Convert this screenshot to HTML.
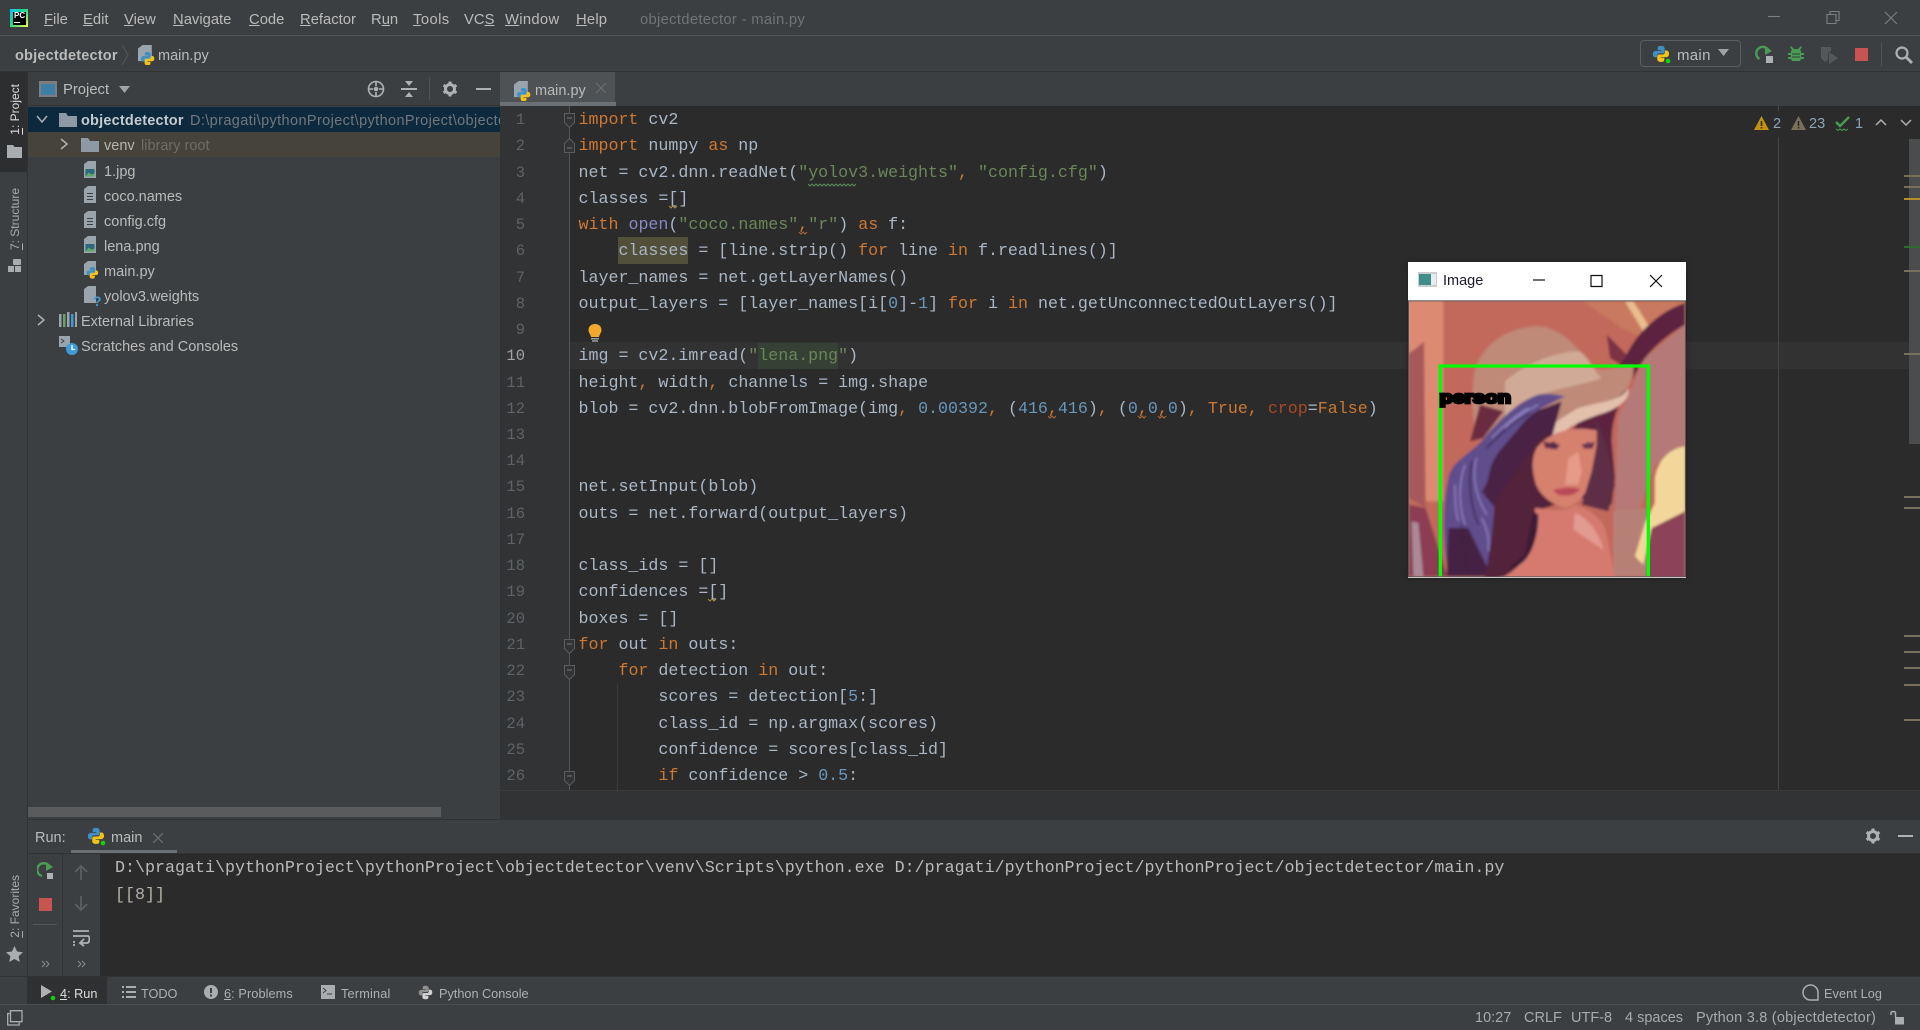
<!DOCTYPE html>
<html><head><meta charset="utf-8"><title>objectdetector - main.py</title>
<style>
html,body{margin:0;padding:0;width:1920px;height:1030px;overflow:hidden;background:#3c3f41}
body{position:relative;font-family:"Liberation Sans",sans-serif;color:#bbb;font-size:14.5px}
.a,.t,svg.i{position:absolute}
.t{white-space:pre;line-height:20px;height:20px;transform:translateY(1px)}
.m{font-size:14.8px;top:9px;color:#bbb}
.v{writing-mode:vertical-rl;transform:rotate(180deg);white-space:pre;position:absolute;font-size:12px;line-height:16px}
#code,#nums{position:absolute;font-family:"Liberation Mono",monospace;font-size:16.65px;line-height:26.24px;white-space:pre}
#code{left:578.5px;top:107.2px;color:#a9b7c6}
#nums{left:500px;width:25px;top:107.2px;text-align:right;color:#606366;font-size:15.5px}
.k{color:#cc7832}.s{color:#6a8759}.n{color:#6897bb}.b{color:#8888c6}.p{color:#aa4926}
.con{position:absolute;left:115px;font-family:"Liberation Mono",monospace;font-size:16.67px;line-height:26px;color:#bbb;white-space:pre}
.st{font-size:14.5px;top:1007px;color:#a8abae}
.bt{font-size:12.7px;top:983px;color:#aeb1b4}
</style></head><body>
<svg width="0" height="0" style="position:absolute">
<defs>
<g id="py"><path fill="#3e8fc4" d="M8 .8C5.1.8 5 2 5 3v1.6h3.2v.6H3.3C1.9 5.2.8 6.200.8 8.100c0 2 1 3 2.300 3h1.400V9.400c0-1 .9-1.900 1.900-1.900h3.300c.9 0 1.600-.7 1.600-1.600V3C11.300 1.700 9.900.8 8 .8z"/><path fill="#f4c117" d="M8 15.200c2.900 0 3-1.200 3-2.200v-1.600H7.800v-.6h4.900c1.400 0 2.500-1 2.500-2.900 0-2-1-3-2.300-3h-1.400v1.700c0 1-.9 1.900-1.900 1.900H6.300c-.9 0-1.600.7-1.600 1.600V13c0 1.300 1.400 2.200 3.300 2.200z"/></g>
<g id="folder"><path fill="#8d9aa6" d="M0 0h7l2 3h9v11H0z"/></g>
<g id="txt"><path fill="#9aa4ad" d="M0 3l4-3h8v17H0z"/><path fill="#3c3f41" d="M3 7h6v1H3zM3 10h6v1H3zM3 13h6v1H3z"/></g>
<g id="img"><path fill="#9aa4ad" d="M0 3l4-3h8v17H0z"/><rect x="1.500" y="8" width="9" height="7.500" fill="#2b6a7d"/><path fill="#5fa867" d="M1.500 15.500l3-4 3 2 3-1v3z"/></g>
<g id="pyf"><path fill="#9aa4ad" d="M0 3l4-3h8v14H0z"/><g transform="translate(2 5.500) scale(.8)"><use href="#py"/></g></g>
<g id="q"><path fill="#9aa4ad" d="M0 3l4-3h8v17H0z"/></g>
<g id="fd"><path d="M.5.500h10v9l-5 5-5-5z" fill="#313335" stroke="#5a5d60"/><path d="M3 5h5" stroke="#777"/></g>
<g id="fu"><path d="M.5 14.500h10v-9l-5-5-5 5z" fill="#313335" stroke="#5a5d60"/><path d="M3 10h5" stroke="#777"/></g>
<g id="gear"><circle cx="8" cy="8" r="4.500" fill="none" stroke="#afb1b3" stroke-width="3"/><path stroke="#afb1b3" stroke-width="3" d="M8 .500v3M8 12.500v3M1.500 4.250l2.600 1.500M11.900 10.250l2.600 1.500M1.500 11.750l2.600-1.500M11.900 5.750l2.600-1.500"/></g>
</defs></svg>

<!-- chrome bars -->
<div class="a" style="left:0;top:35px;width:1920px;height:1px;background:#515355"></div>
<div class="a" style="left:0;top:71px;width:1920px;height:1px;background:#323232"></div>
<!-- logo -->
<div class="a" style="left:10px;top:9px;width:18px;height:18px;background:linear-gradient(135deg,#07c3f2 0,#21d789 45%,#fcf84a 100%)"></div>
<div class="a" style="left:13px;top:12px;width:13px;height:13px;background:#000"></div>
<div class="t" style="left:14px;top:10px;font-size:8px;font-weight:bold;color:#fff;line-height:10px;height:10px">PC</div>
<div class="a" style="left:14px;top:22px;width:6px;height:1px;background:#fff"></div>
<!-- menu -->
<div class="t m" style="left:44px"><u>F</u>ile</div>
<div class="t m" style="left:83px"><u>E</u>dit</div>
<div class="t m" style="left:124px"><u>V</u>iew</div>
<div class="t m" style="left:173px"><u>N</u>avigate</div>
<div class="t m" style="left:249px"><u>C</u>ode</div>
<div class="t m" style="left:300px"><u>R</u>efactor</div>
<div class="t m" style="left:371px">R<u>u</u>n</div>
<div class="t m" style="left:413px;letter-spacing:.4px"><u>T</u>ools</div>
<div class="t m" style="left:464px">VC<u>S</u></div>
<div class="t m" style="left:505px;letter-spacing:.3px"><u>W</u>indow</div>
<div class="t m" style="left:576px;letter-spacing:.2px"><u>H</u>elp</div>
<div class="t m" style="left:640px;color:#717476;letter-spacing:.3px">objectdetector - main.py</div>
<!-- window controls -->
<svg class="i" style="left:1760px;top:8px" width="150" height="20" fill="none" stroke="#7d8082" stroke-width="1.100">
<path d="M8 8.500h12"/><path d="M67 6.500h9v9h-9zM70 6.500V3.500h9v9h-3"/><path d="M125 4l12 12M137 4l-12 12"/></svg>
<!-- nav bar -->
<div class="t" style="left:15px;top:45px;font-weight:bold;color:#bbb;letter-spacing:.2px">objectdetector</div>
<svg class="i" style="left:121px;top:44px" width="9" height="22" fill="none" stroke="#55585a"><path d="M1 1l6 10-6 10"/></svg>
<svg class="i" style="left:138px;top:45px" width="18" height="20"><use href="#pyf" transform="scale(1.150)"/></svg>
<div class="t" style="left:158px;top:45px">main.py</div>
<!-- run config -->
<div class="a" style="left:1640px;top:40px;width:101px;height:27px;border:1px solid #5b5e60;border-radius:4px;box-sizing:border-box"></div>
<svg class="i" style="left:1652px;top:45px" width="20" height="20"><g transform="scale(1.120)"><use href="#py"/></g><circle cx="16" cy="16" r="2.300" fill="#10d010"/></svg>
<div class="t" style="left:1677px;top:45px;font-size:15px;letter-spacing:.3px">main</div>
<svg class="i" style="left:1718px;top:49px" width="12" height="8"><path d="M0 0h11l-5.500 7z" fill="#a0a3a5"/></svg>
<svg class="i" style="left:1755px;top:45px" width="20" height="20" fill="none"><path d="M14 6.500a6.500 6.500 0 1 0-9.500 7.500" stroke="#499c54" stroke-width="2.400"/><path d="M10 1l7 5-7 4z" fill="#499c54"/><rect x="11" y="11" width="7" height="7" fill="#afb1b3"/></svg>
<svg class="i" style="left:1787px;top:45px" width="18" height="20"><path d="M4 1l3 3h4l3-3 1 1-2 3 1 1v2h3v2h-3v2h3v2h-3l-1 2H5l-1-2H1v-2h3v-2H1V8h3V6l1-1-2-3z" fill="#499c54"/><path d="M5 9h8M5 12h8" stroke="#3c3f41"/></svg>
<svg class="i" style="left:1820px;top:45px" width="20" height="20"><path d="M1 2h10v4l-3 2v7l-3 2-4-4z" fill="#55585a"/><path d="M9 7l9 6-9 6z" fill="#55585a"/></svg>
<div class="a" style="left:1855px;top:48px;width:13px;height:13px;background:#c75450"></div>
<div class="a" style="left:1881px;top:42px;width:1px;height:24px;background:#505254"></div>
<svg class="i" style="left:1894px;top:45px" width="20" height="20" fill="none" stroke="#afb1b3" stroke-width="2.200"><circle cx="8" cy="8" r="5.500"/><path d="M12 12l6 6" stroke-width="2.800"/></svg>

<!-- left stripe -->
<div class="a" style="left:27px;top:72px;width:1px;height:933px;background:#323232"></div>
<div class="a" style="left:0;top:72px;width:27px;height:100px;background:#2d2e2f"></div>
<div class="v" style="left:7px;top:84px;color:#ddd"><u>1</u>: Project</div>
<svg class="i" style="left:7px;top:145px" width="15" height="13"><path fill="#a9adb0" d="M0 0h6l1.500 2H15v11H0z"/></svg>
<div class="v" style="left:7px;top:188px;color:#a8abae"><u>7</u>: Structure</div>
<svg class="i" style="left:8px;top:259px" width="14" height="14" fill="#a9adb0"><rect x="5" y="0" width="8" height="6" rx="1"/><rect x="0" y="7" width="6" height="6"/><rect x="7" y="7" width="6" height="6"/></svg>
<div class="v" style="left:7px;top:875px;color:#a8abae"><u>2</u>: Favorites</div>
<svg class="i" style="left:6px;top:946px" width="17" height="16"><path fill="#a9adb0" d="M8.500 0l2.600 5.500 5.900.7-4.400 4 1.200 5.800-5.300-3-5.300 3 1.200-5.800L0 6.200l5.900-.7z"/></svg>

<!-- project header -->
<div class="a" style="left:39px;top:81px;width:18px;height:16px;box-sizing:border-box;border:2px solid #7b7e80;border-top-width:3px;background:#3f7fa6"></div>
<div class="t" style="left:63px;top:79px;font-size:14.8px">Project</div>
<svg class="i" style="left:119px;top:86px" width="12" height="8"><path d="M0 0h11l-5.500 7z" fill="#a0a3a5"/></svg>
<svg class="i" style="left:367px;top:80px" width="18" height="18" fill="none" stroke="#afb1b3" stroke-width="1.600"><circle cx="9" cy="9" r="7.500"/><circle cx="9" cy="9" r="1.500" fill="#afb1b3"/><path d="M9 1v5M9 12v5M1 9h5M12 9h5"/></svg>
<svg class="i" style="left:400px;top:80px" width="18" height="18"><path fill="#afb1b3" d="M1 8h16v2H1zM5 1h8L9 6zM5 17h8l-4-5z"/></svg>
<div class="a" style="left:429px;top:77px;width:1px;height:23px;background:#505254"></div>
<svg class="i" style="left:442px;top:81px" width="16" height="16"><use href="#gear"/></svg>
<div class="a" style="left:476px;top:88px;width:15px;height:2px;background:#afb1b3"></div>
<div class="a" style="left:27px;top:105px;width:473px;height:1px;background:#323232"></div>

<!-- tree -->
<div class="a" style="left:28px;top:107px;width:472px;height:25px;background:#0d293e"></div>
<div class="a" style="left:28px;top:132px;width:472px;height:25px;background:#45433a"></div>
<svg class="i" style="left:36px;top:115px" width="12" height="9" fill="none" stroke="#afb1b3" stroke-width="1.500"><path d="M1 1l5 6 5-6"/></svg>
<svg class="i" style="left:59px;top:113px" width="18" height="15"><use href="#folder"/></svg>
<div class="t" style="left:81px;top:110px;font-weight:bold;color:#c5cbd0;letter-spacing:.2px">objectdetector</div>
<div class="a" style="left:190px;top:111px;width:310px;height:20px;overflow:hidden;white-space:pre;line-height:20px;color:#73777b;letter-spacing:.38px">D:\pragati\pythonProject\pythonProject\objectdetector</div>
<svg class="i" style="left:60px;top:138px" width="9" height="13" fill="none" stroke="#afb1b3" stroke-width="1.500"><path d="M1 1l6 5-6 5"/></svg>
<svg class="i" style="left:81px;top:138px" width="18" height="15"><use href="#folder"/></svg>
<div class="t" style="left:104px;top:135px;color:#b5b6ae">venv</div>
<div class="t" style="left:141px;top:135px;color:#6f6e62">library root</div>
<svg class="i" style="left:84px;top:161px" width="13" height="18"><use href="#img"/></svg><div class="t" style="left:104px;top:161px">1.jpg</div>
<svg class="i" style="left:84px;top:186px" width="13" height="18"><use href="#txt"/></svg><div class="t" style="left:104px;top:186px">coco.names</div>
<svg class="i" style="left:84px;top:211px" width="13" height="18"><use href="#txt"/></svg><div class="t" style="left:104px;top:211px">config.cfg</div>
<svg class="i" style="left:84px;top:236px" width="13" height="18"><use href="#img"/></svg><div class="t" style="left:104px;top:236px">lena.png</div>
<svg class="i" style="left:84px;top:261px" width="17" height="19"><use href="#pyf"/></svg><div class="t" style="left:104px;top:261px">main.py</div>
<svg class="i" style="left:84px;top:286px" width="13" height="18"><use href="#q"/></svg><div class="t" style="left:93px;top:293px;font-size:14px;font-weight:bold;color:#3e9bd8;line-height:14px;height:14px">?</div><div class="t" style="left:104px;top:286px">yolov3.weights</div>
<svg class="i" style="left:37px;top:314px" width="9" height="13" fill="none" stroke="#afb1b3" stroke-width="1.500"><path d="M1 1l6 5-6 5"/></svg>
<svg class="i" style="left:59px;top:312px" width="18" height="16"><path d="M0 2h2.500v13H0z" fill="#9aa4ad"/><path d="M4 2h2.500v13H4z" fill="#6aa35f"/><path d="M8 0h2.500v15H8z" fill="#9aa4ad"/><path d="M12 2h2.500v13H12z" fill="#3e9bd8"/><path d="M16 0h2v15h-2z" fill="#9aa4ad"/></svg>
<div class="t" style="left:81px;top:311px">External Libraries</div>
<svg class="i" style="left:59px;top:336px" width="20" height="20"><path d="M0 0h11v11H0z" fill="#9aa4ad"/><path d="M2 3l3 2-3 2" stroke="#3c3f41" fill="none"/><circle cx="13" cy="13" r="6" fill="#3e9bd8"/><path d="M13 9v4.500h3" stroke="#fff" fill="none" stroke-width="1.300"/></svg>
<div class="t" style="left:81px;top:336px">Scratches and Consoles</div>
<!-- project scrollbar -->
<div class="a" style="left:28px;top:807px;width:413px;height:10px;background:#595b5d"></div>

<!-- editor -->
<div class="a" style="left:500px;top:72px;width:115px;height:34px;background:#4e5254"></div>
<div class="a" style="left:500px;top:102px;width:116px;height:4px;background:#6b7075"></div>
<svg class="i" style="left:514px;top:81px" width="18" height="20"><use href="#pyf" transform="scale(1.150)"/></svg>
<div class="t" style="left:535px;top:80px">main.py</div>
<svg class="i" style="left:596px;top:83px" width="10" height="10" stroke="#6a6d6f" stroke-width="1.300"><path d="M0 0l10 10M10 0L0 10"/></svg>

<div class="a" style="left:500px;top:106px;width:69px;height:684px;background:#313335"></div>
<div class="a" style="left:569px;top:106px;width:1351px;height:684px;background:#2b2b2b"></div>
<div class="a" style="left:569px;top:342px;width:1351px;height:27px;background:#323232"></div>
<div class="a" style="left:569px;top:106px;width:1px;height:684px;background:#555"></div>
<div class="a" style="left:500px;top:790px;width:1420px;height:29px;background:#313335;border-top:1px solid #3a3c3e;box-sizing:border-box"></div>
<div class="a" style="left:617px;top:684px;width:1px;height:106px;background:#3b3b3b"></div>
<div class="a" style="left:1778px;top:137px;width:1px;height:653px;background:#464749"></div>
<div class="a" style="left:1778px;top:106px;width:1px;height:5px;background:#464749"></div>
<div class="a" style="left:618px;top:237px;width:70px;height:27px;background:#52503a"></div>
<div class="a" style="left:758px;top:343px;width:80px;height:26px;background:#344134"></div>

<div id="nums">1
2
3
4
5
6
7
8
9
<span style="color:#a4a3a3">10</span>
11
12
13
14
15
16
17
18
19
20
21
22
23
24
25
26</div>
<div id="code"><span class="k">import</span> cv2
<span class="k">import</span> numpy <span class="k">as</span> np
net = cv2.dnn.readNet(<span class="s">"yolov3.weights"</span><span class="k">,</span> <span class="s">"config.cfg"</span>)
classes =[]
<span class="k">with</span> <span class="b">open</span>(<span class="s">"coco.names"</span><span class="k">,</span><span class="s">"r"</span>) <span class="k">as</span> f:
    classes = [line.strip() <span class="k">for</span> line <span class="k">in</span> f.readlines()]
layer_names = net.getLayerNames()
output_layers = [layer_names[i[<span class="n">0</span>]-<span class="n">1</span>] <span class="k">for</span> i <span class="k">in</span> net.getUnconnectedOutLayers()]

img = cv2.imread(<span class="s">"lena.png"</span>)
height<span class="k">,</span> width<span class="k">,</span> channels = img.shape
blob = cv2.dnn.blobFromImage(img<span class="k">,</span> <span class="n">0.00392</span><span class="k">,</span> (<span class="n">416</span><span class="k">,</span><span class="n">416</span>)<span class="k">,</span> (<span class="n">0</span><span class="k">,</span><span class="n">0</span><span class="k">,</span><span class="n">0</span>)<span class="k">,</span> <span class="k">True,</span> <span class="p">crop</span>=<span class="k">False</span>)


net.setInput(blob)
outs = net.forward(output_layers)

class_ids = []
confidences =[]
boxes = []
<span class="k">for</span> out <span class="k">in</span> outs:
    <span class="k">for</span> detection <span class="k">in</span> out:
        scores = detection[<span class="n">5</span>:]
        class_id = np.argmax(scores)
        confidence = scores[class_id]
        <span class="k">if</span> confidence &gt; <span class="n">0.5</span>:</div>

<!-- squiggles -->
<svg class="i" style="left:560px;top:100px" width="800" height="600" fill="none" stroke-width="1">
<path stroke="#5f8a5a" d="M248 84l2 2 2-2 2 2 2-2 2 2 2-2 2 2 2-2 2 2 2-2 2 2 2-2 2 2 2-2 2 2 2-2 2 2 2-2 2 2 2-2 2 2 2-2 2 2 2-2"/>
<path stroke="#a98b4a" d="M109 106l2 2 2-2 2 2 2-2"/><path stroke="#a98b4a" d="M148 499l2 2 2-2 2 2 2-2"/>
<path stroke="#b06a3a" d="M239 132l2 2 2-2 2 2 2-2M488 316l2 2 2-2 2 2 2-2M578 316l2 2 2-2 2 2 2-2M598 316l2 2 2-2 2 2 2-2"/>
</svg>
<!-- fold marks -->
<svg class="i" style="left:564px;top:113px" width="12" height="16"><use href="#fd"/></svg>
<svg class="i" style="left:564px;top:138px" width="12" height="16"><use href="#fu"/></svg>
<svg class="i" style="left:564px;top:639px" width="12" height="16"><use href="#fd"/></svg>
<svg class="i" style="left:564px;top:665px" width="12" height="16"><use href="#fd"/></svg>
<svg class="i" style="left:564px;top:771px" width="12" height="16"><use href="#fd"/></svg>
<!-- bulb -->
<svg class="i" style="left:588px;top:324px" width="14" height="18"><path fill="#f2a82c" d="M7 0c4 0 6.500 2.500 6.500 6 0 3-2 4-2.500 7H3C2.500 10 .5 9 .5 6 .5 2.500 3 0 7 0z"/><path fill="#9a9c9e" d="M3 14h8v1.500H3zM4 16.200h6v1.500H4z"/></svg>

<!-- inspections -->
<svg class="i" style="left:1754px;top:116px" width="15" height="14"><path fill="#c4920f" d="M7.500 0L15 14H0z"/><path fill="#2b2b2b" d="M6.700 5h1.600v5H6.700zM6.700 11h1.600v1.500H6.700z"/></svg>
<div class="t" style="left:1773px;top:113px;color:#8fa3b5;font-size:14.5px">2</div>
<svg class="i" style="left:1791px;top:116px" width="15" height="14"><path fill="#7a705a" d="M7.500 0L15 14H0z"/><path fill="#2b2b2b" d="M6.700 5h1.600v5H6.700zM6.700 11h1.600v1.500H6.700z"/></svg>
<div class="t" style="left:1809px;top:113px;color:#8fa3b5;font-size:14.5px">23</div>
<svg class="i" style="left:1835px;top:116px" width="16" height="16" fill="none" stroke="#499c54"><path d="M1 6l4 4 9-9" stroke-width="2.400"/><path d="M1 13l2 1.500 2-1.500 2 1.500 2-1.500 2 1.500 2-1.500"/></svg>
<div class="t" style="left:1855px;top:113px;color:#8fa3b5;font-size:14.5px">1</div>
<svg class="i" style="left:1875px;top:118px" width="37" height="10" fill="none" stroke="#afb1b3" stroke-width="1.500"><path d="M1 7l5-5 5 5M26 2l5 5 5-5"/></svg>

<!-- stripes -->
<div class="a" style="left:1909px;top:139px;width:11px;height:305px;background:#4a4c4e"></div>
<div class="a" style="left:1904px;top:175px;width:16px;height:2px;background:#77705a"></div>
<div class="a" style="left:1904px;top:186px;width:16px;height:2px;background:#77705a"></div>
<div class="a" style="left:1904px;top:198px;width:16px;height:2px;background:#b5902a"></div>
<div class="a" style="left:1904px;top:246px;width:16px;height:2px;background:#2e6b2e"></div>
<div class="a" style="left:1904px;top:270px;width:16px;height:2px;background:#77705a"></div>
<div class="a" style="left:1904px;top:353px;width:16px;height:2px;background:#77705a"></div>
<div class="a" style="left:1904px;top:496px;width:16px;height:2px;background:#77705a"></div>
<div class="a" style="left:1904px;top:507px;width:16px;height:2px;background:#77705a"></div>
<div class="a" style="left:1904px;top:635px;width:16px;height:2px;background:#77705a"></div>
<div class="a" style="left:1904px;top:651px;width:16px;height:2px;background:#77705a"></div>
<div class="a" style="left:1904px;top:667px;width:16px;height:2px;background:#77705a"></div>
<div class="a" style="left:1904px;top:684px;width:16px;height:2px;background:#77705a"></div>
<div class="a" style="left:1904px;top:719px;width:16px;height:2px;background:#77705a"></div>

<!-- run panel -->
<div class="a" style="left:28px;top:819px;width:1892px;height:1px;background:#323232"></div>
<div class="t" style="left:35px;top:827px">Run:</div>
<svg class="i" style="left:87px;top:827px" width="20" height="20"><g transform="scale(1.120)"><use href="#py"/></g><circle cx="16" cy="16" r="2.300" fill="#10d010"/></svg>
<div class="t" style="left:111px;top:827px">main</div>
<svg class="i" style="left:153px;top:833px" width="10" height="10" stroke="#6a6d6f" stroke-width="1.200"><path d="M0 0l10 10M10 0L0 10"/></svg>
<div class="a" style="left:71px;top:850px;width:106px;height:3px;background:#6b7075"></div>
<svg class="i" style="left:1865px;top:828px" width="16" height="16"><use href="#gear"/></svg>
<div class="a" style="left:1898px;top:835px;width:15px;height:2px;background:#afb1b3"></div>
<div class="a" style="left:100px;top:853px;width:1820px;height:123px;background:#2b2b2b"></div>
<div class="a" style="left:28px;top:853px;width:1892px;height:1px;background:#323232"></div>
<div class="a" style="left:62px;top:853px;width:1px;height:123px;background:#323232"></div>
<div class="a" style="left:33px;top:924px;width:24px;height:1px;background:#55585a"></div>
<div class="con" style="top:856px">D:\pragati\pythonProject\pythonProject\objectdetector\venv\Scripts\python.exe D:/pragati/pythonProject/pythonProject/objectdetector/main.py</div>
<div class="con" style="top:883px;color:#b5b0a5">[[8]]</div>
<svg class="i" style="left:37px;top:862px" width="18" height="20" fill="none"><path d="M13 6a6.500 6.500 0 1 0-8 8" stroke="#499c54" stroke-width="2.400"/><path d="M9 0l7 5-7 4z" fill="#499c54"/><rect x="10" y="11" width="6" height="6" fill="#afb1b3"/></svg>
<div class="a" style="left:39px;top:898px;width:13px;height:13px;background:#c75450"></div>
<svg class="i" style="left:74px;top:864px" width="14" height="48" fill="none" stroke="#5c5f61" stroke-width="1.800"><path d="M7 16V2M1 8l6-6 6 6M7 32v14M1 40l6 6 6-6"/></svg>
<svg class="i" style="left:72px;top:929px" width="18" height="18" fill="none" stroke="#afb1b3" stroke-width="1.800"><path d="M1 2h16M1 7h15c2 0 2 7-1 7H9"/><path d="M12 10l-4 4 4 3"/><path d="M1 13h2M1 16h2"/></svg>
<svg class="i" style="left:41px;top:960px" width="46" height="8" fill="none" stroke="#8a8d8f"><path d="M1 1l3 3-3 3M5 1l3 3-3 3M37 1l3 3-3 3M41 1l3 3-3 3"/></svg>

<!-- bottom tabs -->
<div class="a" style="left:0;top:976px;width:1920px;height:1px;background:#323232"></div>
<div class="a" style="left:0;top:1004px;width:1920px;height:1px;background:#4a4c4e"></div>
<div class="a" style="left:27px;top:977px;width:80px;height:27px;background:#2f3031"></div>
<svg class="i" style="left:41px;top:985px" width="15" height="16"><path fill="#afb1b3" d="M0 0l11 6.500L0 13z"/><circle cx="12" cy="13" r="2.300" fill="#10d010"/></svg>
<div class="t bt" style="left:60px;color:#ddd"><u>4</u>: Run</div>
<svg class="i" style="left:122px;top:986px" width="14" height="12" fill="#a9adb0"><path d="M0 0h2v2H0zM0 5h2v2H0zM0 10h2v2H0zM4 0h10v2H4zM4 5h10v2H4zM4 10h10v2H4z"/></svg>
<div class="t bt" style="left:141px">TODO</div>
<svg class="i" style="left:204px;top:985px" width="14" height="14"><circle cx="7" cy="7" r="7" fill="#a9adb0"/><path d="M6 3h2v5H6zM6 9.500h2v2H6z" fill="#3c3f41"/></svg>
<div class="t bt" style="left:224px;letter-spacing:.1px"><u>6</u>: Problems</div>
<svg class="i" style="left:321px;top:985px" width="14" height="14"><rect width="14" height="14" fill="#a9adb0"/><path d="M2 3l3 2.500L2 8M6 9h5" stroke="#3c3f41" fill="none"/></svg>
<div class="t bt" style="left:341px;letter-spacing:.2px">Terminal</div>
<svg class="i" style="left:418px;top:985px" width="15" height="15"><g transform="scale(.94)" style="filter:grayscale(1) brightness(1.100)"><use href="#py"/></g></svg>
<div class="t bt" style="left:439px">Python Console</div>
<svg class="i" style="left:1802px;top:984px" width="17" height="17" fill="none" stroke="#a9adb0" stroke-width="1.500"><path d="M16 16H8.500a7.500 7.500 0 1 1 7.500-7.500z"/></svg>
<div class="t bt" style="left:1824px;letter-spacing:.1px">Event Log</div>

<!-- status -->
<svg class="i" style="left:7px;top:1010px" width="16" height="16" fill="none" stroke="#a9adb0" stroke-width="1.300"><path d="M3.500.7h11.500v11H3.500zM3 3.500H.7v11.500h11.500v-2.500"/></svg>
<div class="t st" style="left:1475px">10:27</div>
<div class="t st" style="left:1524px">CRLF</div>
<div class="t st" style="left:1571px">UTF-8</div>
<div class="t st" style="left:1625px">4 spaces</div>
<div class="t st" style="left:1696px;letter-spacing:.22px">Python 3.8 (objectdetector)</div>
<svg class="i" style="left:1890px;top:1010px" width="15" height="15"><rect x="5" y="7" width="9" height="7.500" fill="#a9adb0"/><path d="M1 5V3c0-2 4.500-2 4.500 0v4" fill="none" stroke="#a9adb0" stroke-width="1.500"/></svg>

<!-- image window -->
<div class="a" style="left:1408px;top:262px;width:278px;height:316px;background:#fff;box-shadow:0 0 6px rgba(0,0,0,.3)"></div>
<svg class="i" style="left:1418px;top:272px" width="19" height="16"><rect width="19" height="15" fill="#c9cdd0"/><rect x="1" y="2" width="12" height="11" fill="#3f8f88"/><rect x="13" y="2" width="5" height="11" fill="#e8ecee"/></svg>
<div class="t" style="left:1443px;top:270px;font-size:14.5px;color:#1a1a2a">Image</div>
<svg class="i" style="left:1530px;top:272px" width="136" height="18" fill="none" stroke="#111" stroke-width="1.200"><path d="M3 8h12"/><path d="M61 3.500h11v11H61z"/><path d="M120 3l12 12M132 3l-12 12"/></svg>
<svg class="i" style="left:1405px;top:258px" width="285" height="325" viewBox="0 0 855 975">
<defs><filter id="bl" x="-5%" y="-5%" width="110%" height="110%"><feGaussianBlur stdDeviation="4"/></filter><clipPath id="cp"><rect x="12" y="130" width="828" height="825"/></clipPath></defs>
<rect x="9" y="127" width="834" height="831" fill="#555"/>
<g clip-path="url(#cp)"><g filter="url(#bl)">
<rect x="0" y="120" width="860" height="850" fill="#c2695c"/>
<path fill="#dc8a72" d="M0 120h115v610H60L55 260 0 290z"/>
<path fill="#a8585a" d="M12 290l45-40 5 500-50-30z"/>
<path fill="#8c3c52" d="M12 740l50 10 65 205H12z"/>
<path fill="#c2cad0" d="M20 790l20 5 15 160H25z" opacity=".55"/>
<path fill="#c9795f" d="M535 130h305v60l-100 60-90-40z"/>
<path fill="#e9bd90" d="M660 130h25l60 95-18 15z"/>
<path fill="#7c3345" d="M605 230l60 60 30-30-30 70-50-30z"/>
<path fill="#b57a78" d="M720 300l120-100v380l-90 40-60 170-60-20 10-290z"/>
<path fill="#5b2440" d="M840 135v65c-70 40-130 100-150 150-40 70-70 120-70 200l10 110-10 80-90-20-30-200 120-170 40-50c30-70 100-140 180-165z"/>
<path fill="#b78076" d="M625 760l100-10 10 205H625z"/>
<path fill="#8c4258" d="M735 780l105-40v220H725z"/>
<path fill="#f3d79a" d="M750 660c10-60 50-90 90-95v195l-100 50-25 110-25-25 30-100 30-60z"/>
<path fill="#bf8a78" d="M205 375c0-80 70-165 190-170 70 0 120 60 165 120 40 25 90-10 125 0 5 50-30 90-75 110-70 20-130 30-190 90-50 60-95 130-150 220l-15-20 110-190c-40-10-120 10-150 0 0 0-20-80-10-160z"/>
<path fill="#d6b4a0" d="M300 370c70-60 160-90 225-90 30 20 40 60 65 80-50 20-140 30-210 60-40 10-60 40-80 70z" opacity=".75"/>
<path fill="#e3c0ac" d="M270 730l110-170c40-50 90-80 140-110 70-20 130-20 150-60 10 40-50 70-90 80-50 20-90 30-130 80-60 70-110 130-150 200z"/>
<path fill="#6b2c3f" d="M225 440l-30 110 40-10 60-80z"/>
<path fill="#4a2345" d="M170 620c30-50 70-50 100-80l120-80 80-30-30 110-120 200-50 100-20 70-50 40-30-110-10-110z"/>
<path fill="#5f4e8c" d="M130 660c10-50 60-70 100-110 40-50 100-115 170-140 30-5 60 0 80 5-50 25-100 45-130 85-30 40-75 80-90 120-10 30-10 60-30 80 30 40 65 70 75 110-10 50-30 90-50 145H130c-15-100-20-200 0-295z"/>
<path stroke="#8c7cba" stroke-width="5" fill="none" d="M180 620c-20 60-20 120 0 180M215 600c-15 50-5 110 30 170M260 540c30-30 60-60 110-90M300 510c30-30 60-50 100-70M150 680c0 40 0 70 10 110M230 780c15 30 25 60 20 100"/>
<path stroke="#3c2a55" stroke-width="5" fill="none" d="M200 610c-10 60-5 130 20 190M245 570c40-40 80-80 130-105M170 800c0 50 10 100 20 150M270 800c10 40 0 90-10 130"/>
<path fill="#411c38" d="M130 810l60 0 70 145H125z" opacity=".85"/>
<path fill="#52233a" d="M270 730l120-170 30-40 30 220-60 20 10 120-70 70-90 15 20-130z"/>
<path fill="#d6806e" d="M395 570c40-50 110-70 190-50 10 40 5 90-25 150-20 40-40 70-80 80-40-10-80-40-90-80-10-40-10-70 5-100z"/>
<path fill="#e69a88" d="M490 600l30-20 10 60-10 40-40 0z"/>
<path fill="#5d2d44" d="M575 480l35 100 20 100-20 80-80-20 30-100 15-80z"/>
<path fill="#6c2e46" d="M415 550l50 10-10 15-35-5zM530 560l40-8-8 20-25 0z"/>
<circle cx="445" cy="560" r="9" fill="#4e2c4e"/><circle cx="550" cy="560" r="8" fill="#5e3a5e"/>
<path fill="#b84a58" d="M445 695c25-5 55-10 80-2-10 20-50 25-70 15z"/>
<path fill="#d67a70" d="M390 750c30 0 90 20 120-10 30 10 70 30 90 70l30 150H290c50-30 100-60 100-210z"/>
<path fill="#e8a8a0" d="M510 765c30 10 70 50 85 110l-90-60z" opacity=".7"/>
<path fill="#3c1b36" d="M385 760l15 10c0 80-30 160-90 160l50-40z"/>
</g>
<path d="M106 955V324H730V955" fill="none" stroke="#00ff00" stroke-width="10"/>
<text x="104" y="435" font-family="Liberation Sans,sans-serif" font-size="51" font-weight="bold" fill="#000" stroke="#000" stroke-width="8" textLength="214" lengthAdjust="spacingAndGlyphs">person</text>
</g></svg>
</body></html>
